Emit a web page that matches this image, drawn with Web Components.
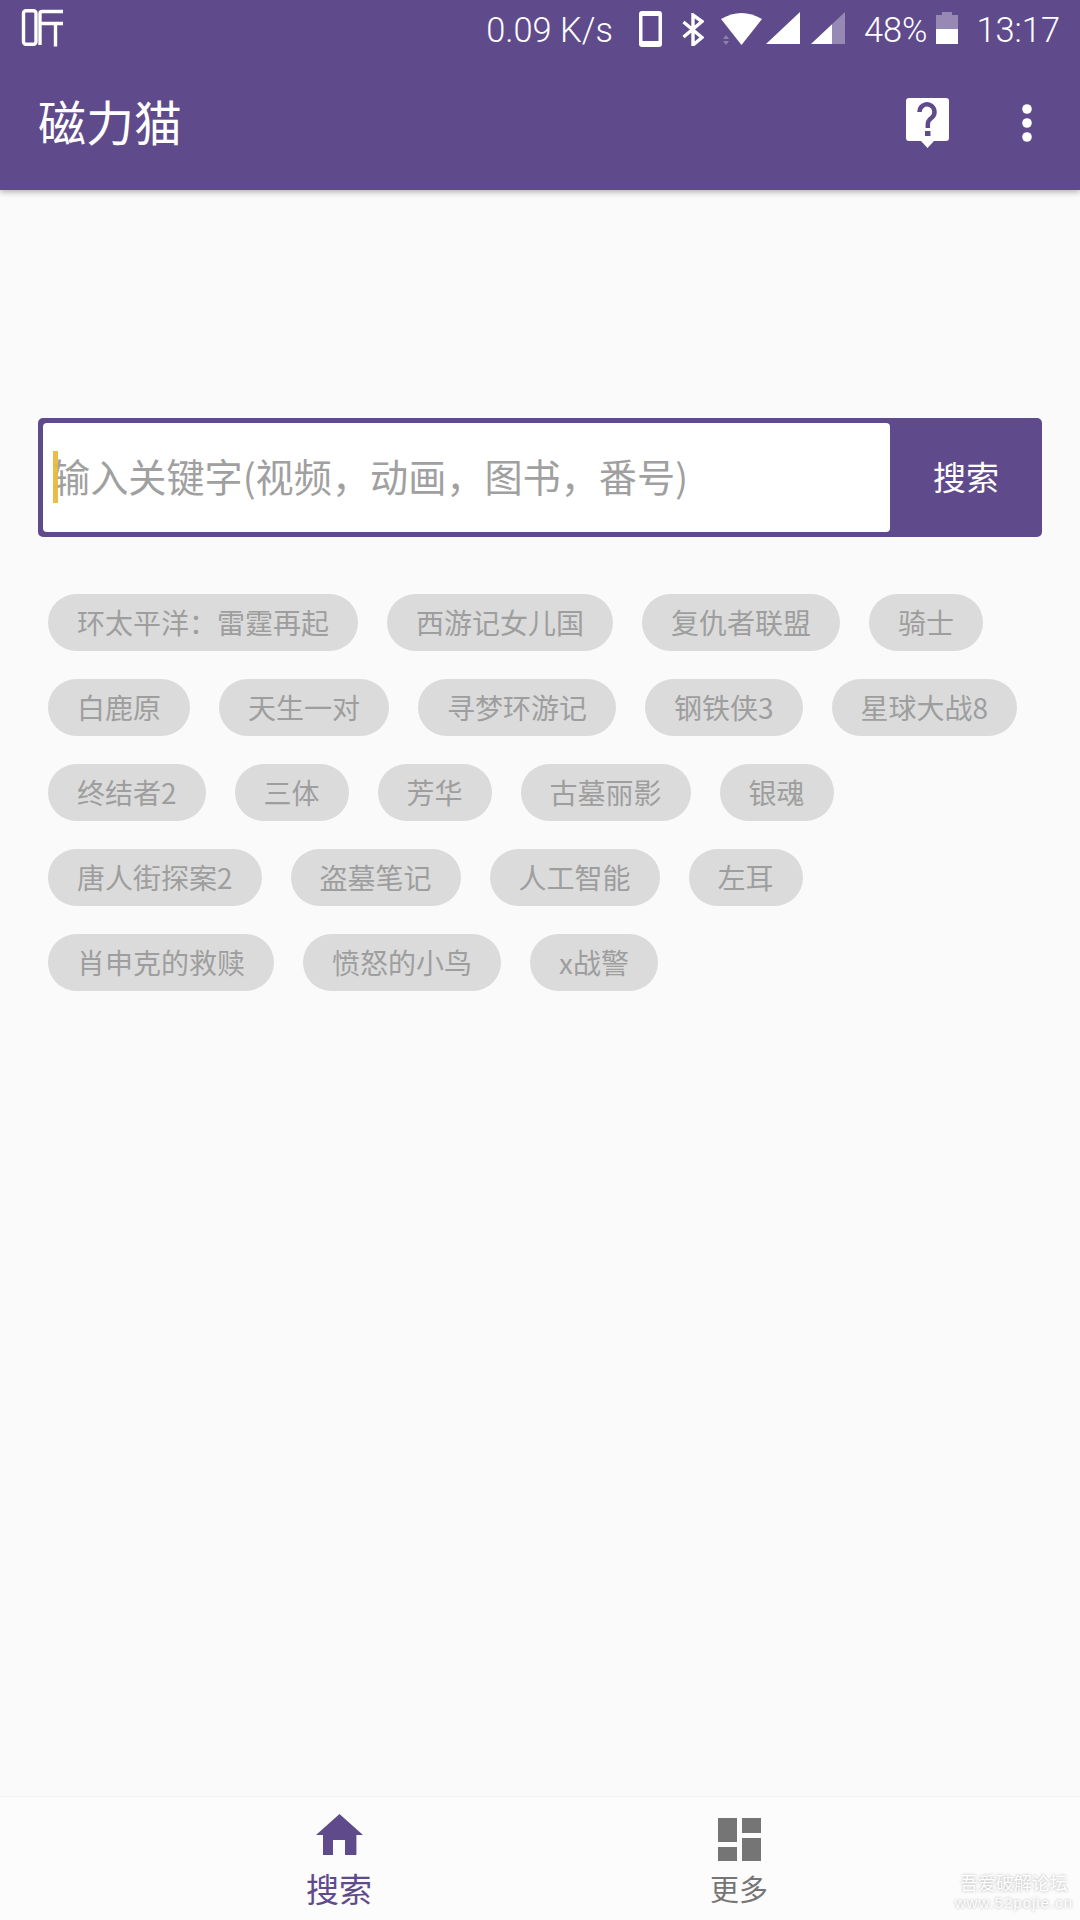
<!DOCTYPE html>
<html lang="zh">
<head>
<meta charset="utf-8">
<title>磁力猫</title>
<style>
  html, body { margin: 0; padding: 0; background: #fafafa; }
  body { font-family: "Noto Sans CJK SC", "Noto Sans", sans-serif; }
</style>
</head>
<body>
<cili-app>
  <app-header title-text="磁力猫"></app-header>
  <search-box placeholder="输入关键字(视频，动画，图书，番号)" action="搜索"></search-box>
  <tag-list>
    <tag-chip>环太平洋：雷霆再起</tag-chip>
    <tag-chip>西游记女儿国</tag-chip>
    <tag-chip>复仇者联盟</tag-chip>
    <tag-chip>骑士</tag-chip>
    <tag-chip>白鹿原</tag-chip>
    <tag-chip>天生一对</tag-chip>
    <tag-chip>寻梦环游记</tag-chip>
    <tag-chip>钢铁侠3</tag-chip>
    <tag-chip>星球大战8</tag-chip>
    <tag-chip>终结者2</tag-chip>
    <tag-chip>三体</tag-chip>
    <tag-chip>芳华</tag-chip>
    <tag-chip>古墓丽影</tag-chip>
    <tag-chip>银魂</tag-chip>
    <tag-chip>唐人街探案2</tag-chip>
    <tag-chip>盗墓笔记</tag-chip>
    <tag-chip>人工智能</tag-chip>
    <tag-chip>左耳</tag-chip>
    <tag-chip>肖申克的救赎</tag-chip>
    <tag-chip>愤怒的小鸟</tag-chip>
    <tag-chip>x战警</tag-chip>
  </tag-list>
  <bottom-nav slot="nav"></bottom-nav>
</cili-app>

<script>
const PURPLE = '#5f4b8b';

class CiliApp extends HTMLElement {
  constructor() {
    super();
    this.attachShadow({ mode: 'open' });
  }
  connectedCallback() {
    this.shadowRoot.innerHTML = `
      <style>
        :host { display: flex; flex-direction: column; width: 1080px; height: 1920px; position: relative; overflow: hidden; background: #fafafa; }
        main { flex: 1; padding-top: 228px; }
        .watermark {
          position: absolute; right: 7px; bottom: 9px;
          color: #fff; text-align: center; font-size: 18px; line-height: 24px;
          font-family: "Noto Sans CJK SC", sans-serif;
          text-shadow: 0 0 3px #aaa;
        }
        .watermark small { display: block; font-size: 15px; line-height: 17px; font-family: "Liberation Sans", sans-serif; letter-spacing: 1px; }
      </style>
      <slot name="header"></slot>
      <main><slot></slot></main>
      <slot name="nav"></slot>
      <div class="watermark">吾爱破解论坛<small>www.52pojie.cn</small></div>
    `;
  }
}

class AppHeader extends HTMLElement {
  constructor() {
    super();
    this.attachShadow({ mode: 'open' });
  }
  connectedCallback() {
    this.slot = 'header';
    const title = this.getAttribute('title-text');
    this.shadowRoot.innerHTML = `
      <style>
        :host { display: block; height: 190px; background: ${PURPLE}; color: #fff; box-shadow: 0 2px 6px rgba(0,0,0,.3); position: relative; z-index: 1; }
        svg { display: block; flex: none; }
        .status { height: 58px; display: flex; align-items: flex-start; padding: 9px 20px 0 21px; box-sizing: border-box; font-family: Roboto, sans-serif; font-weight: 300; font-size: 34.400px; line-height: 56px; }
        .status .txt { margin-top: -7px; white-space: nowrap; }
        .right { margin-left: auto; display: flex; align-items: flex-start; }
        .bar { height: 132px; box-sizing: border-box; padding: 0 48px 2px 38px; display: flex; align-items: center; }
        h1 { margin: -6px 0 0; font-size: 48px; font-weight: 400; line-height: 64px; flex: 1; }
      </style>
      <div class="status">
        <svg width="42" height="38" viewBox="0 0 42 38" fill="none" stroke="#fff" stroke-width="3.400">
          <rect x="2.500" y="1.700" width="12.500" height="33.500" rx="2.500"/>
          <path d="M42 2.500H21Q19 2.500 19 4.500V36"/>
          <path d="M19 14.500H42M34.500 14.500V37.500"/>
        </svg>
        <div class="right">
          <span class="txt" style="margin-right:26px">0.09 K/s</span>
          <svg style="margin:2px 20px 0 0" width="23" height="36" viewBox="0 0 23 36"><path fill="#fff" fill-rule="evenodd" d="M3 0H20Q23 0 23 3V33Q23 36 20 36H3Q0 36 0 33V3Q0 0 3 0ZM3.500 5V30H19.500V5Z"/></svg>
          <svg style="margin:4px 17px 0 0" width="22" height="33" viewBox="0 0 22 33" fill="none" stroke="#fff" stroke-width="3.400"><path d="M1.500 9L20 24.500L11 32V2L20 8.500L1.500 24"/></svg>
          <svg style="margin:4px 4px 0 0" width="41" height="32" viewBox="0 0 41 32"><path fill="#fff" d="M0 6Q20.500-6 41 6L20.500 32Z"/><path fill="#fff" opacity=".3" d="M2 26L5 22L8 26ZM2 28L5 32L8 28Z"/></svg>
          <svg style="margin:3px 11px 0 0" width="34" height="32" viewBox="0 0 34 32"><path fill="#fff" d="M0 32H34V0Z"/></svg>
          <svg style="margin:3px 19px 0 0" width="34" height="32" viewBox="0 0 34 32"><path fill="#fff" opacity=".35" d="M21 12.200L34 0V32H21Z"/><path fill="#fff" d="M0 32H21V12.200Z"/></svg>
          <span class="txt" style="margin-right:9px">48%</span>
          <svg style="margin:3px 18px 0 0" width="22" height="32" viewBox="0 0 22 32"><path fill="#fff" opacity=".35" d="M0 3H6V0H16V3H22V17H0Z"/><path fill="#fff" d="M0 17H22V32H0Z"/></svg>
          <span class="txt">13:17</span>
        </div>
      </div>
      <div class="bar">
        <h1>${title}</h1>
        <svg style="margin-right:73px" width="43" height="50" viewBox="0 0 43 50">
          <path fill="#fff" d="M3 0H40Q43 0 43 3V40Q43 43 40 43H28L21.500 50L15 43H3Q0 43 0 40V3Q0 0 3 0Z"/>
          <path fill="none" stroke="${PURPLE}" stroke-width="4.500" d="M13.500 14A7.500 7.500 0 1 1 26 19.500C23 21.500 21.800 23 21.800 26.500V30"/>
          <rect x="19" y="33" width="5.500" height="5" fill="${PURPLE}"/>
        </svg>
        <svg width="10" height="38" viewBox="0 0 10 38">
          <circle cx="5" cy="5" r="4.800" fill="#fff"/><circle cx="5" cy="19" r="4.800" fill="#fff"/><circle cx="5" cy="33" r="4.800" fill="#fff"/>
        </svg>
      </div>
    `;
  }
}

class SearchBox extends HTMLElement {
  constructor() {
    super();
    this.attachShadow({ mode: 'open' });
  }
  connectedCallback() {
    this.shadowRoot.innerHTML = `
      <style>
        :host { display: flex; margin: 0 38px; height: 119px; box-sizing: border-box; padding: 5px 0 5px 5px; background: ${PURPLE}; border-radius: 5px; }
        .field { flex: 1; background: #fff; border-radius: 4px; display: flex; align-items: center; padding: 0 0 5px 9px; position: relative; color: #a0a0a0; font-size: 38.150px; }
        .caret { position: absolute; left: 10px; top: 28px; width: 5px; height: 52px; background: #e9b93e; opacity: .95; }
        button { all: unset; width: 152px; display: flex; align-items: center; justify-content: center; padding-bottom: 4px; box-sizing: border-box; color: #fff; font-size: 33px; font-family: inherit; }
      </style>
      <div class="field"><span class="caret"></span><span>${this.getAttribute('placeholder')}</span></div>
      <button>${this.getAttribute('action')}</button>
    `;
  }
}

class TagList extends HTMLElement {
  constructor() {
    super();
    this.attachShadow({ mode: 'open' });
  }
  connectedCallback() {
    this.shadowRoot.innerHTML = `
      <style>
        :host { display: flex; flex-wrap: wrap; gap: 28px 29px; margin: 57px 48px 0; }
      </style>
      <slot></slot>
    `;
  }
}

class TagChip extends HTMLElement {
  constructor() {
    super();
    this.attachShadow({ mode: 'open' });
  }
  connectedCallback() {
    this.shadowRoot.innerHTML = `
      <style>
        :host { display: block; height: 57px; line-height: 57px; padding: 0 29px; border-radius: 29px; background: #dbdbdb; color: #9e9e9e; font-size: 28px; white-space: nowrap; }
      </style>
      <slot></slot>
    `;
  }
}

class BottomNav extends HTMLElement {
  constructor() {
    super();
    this.attachShadow({ mode: 'open' });
  }
  connectedCallback() {
    this.shadowRoot.innerHTML = `
      <style>
        :host { display: flex; justify-content: center; height: 124px; padding-right: 2px; background: #fcfcfc; border-top: 1px solid #f2f2f2; box-sizing: border-box; }
        .item { width: 400px; display: flex; flex-direction: column; align-items: center; }
        .item svg { display: block; flex: none; }
        .active { padding-top: 17px; color: ${PURPLE}; font-size: 33px; line-height: 42px; }
        .active span { margin-top: 12px; }
        .idle { padding-top: 21px; color: #757575; font-size: 29px; line-height: 40px; }
        .idle span { margin-top: 7px; }
      </style>
      <div class="item active">
        <svg width="47" height="41" viewBox="0 0 47 41"><path fill="${PURPLE}" d="M23.500 0L47 21H40.400V41H29V26H17V41H7V21H0Z"/></svg>
        <span>搜索</span>
      </div>
      <div class="item idle">
        <svg width="43" height="43" viewBox="0 0 43 43"><path fill="#757575" d="M0 0H19V24H0ZM24 0H43V15H24ZM24 20H43V43H24ZM0 29H19V43H0Z"/></svg>
        <span>更多</span>
      </div>
    `;
  }
}

customElements.define('cili-app', CiliApp);
customElements.define('app-header', AppHeader);
customElements.define('search-box', SearchBox);
customElements.define('tag-list', TagList);
customElements.define('tag-chip', TagChip);
customElements.define('bottom-nav', BottomNav);
</script>
</body>
</html>
